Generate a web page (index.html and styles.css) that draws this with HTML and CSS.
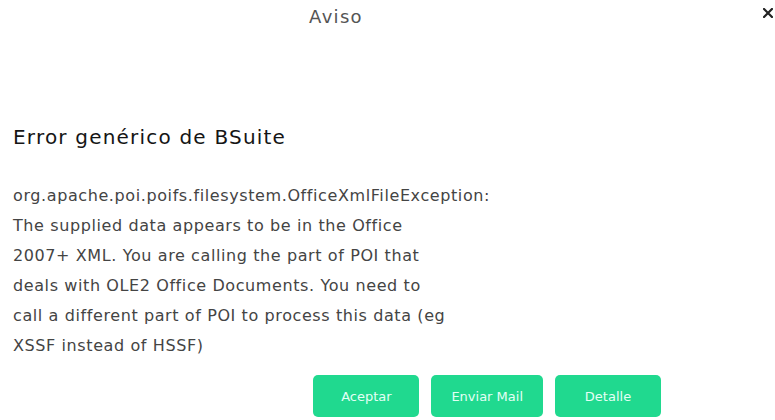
FILE: index.html
```html
<!DOCTYPE html>
<html lang="es">
<head>
<meta charset="utf-8">
<title>Aviso</title>
<link rel="stylesheet" href="styles.css">
</head>
<body>
<div class="modal">
  <header class="modal-header">
    <h1 class="modal-title">Aviso</h1>
    <button class="close" aria-label="Cerrar">
      <svg width="10" height="10" viewBox="0 0 10 10"><path d="M1 1L9 9M9 1L1 9" stroke="#222" stroke-width="2.2" stroke-linecap="square"/></svg>
    </button>
  </header>
  <main class="modal-body">
    <h2 class="error-title">Error genérico de BSuite</h2>
    <p class="error-text">org.apache.poi.poifs.filesystem.OfficeXmlFileException:<br>The supplied data appears to be in the Office<br>2007+ XML. You are calling the part of POI that<br>deals with OLE2 Office Documents. You need to<br>call a different part of POI to process this data (eg<br>XSSF instead of HSSF)</p>
  </main>
  <footer class="modal-footer">
    <button class="btn">Aceptar</button>
    <button class="btn">Enviar Mail</button>
    <button class="btn">Detalle</button>
  </footer>
</div>
</body>
</html>
```
FILE: styles.css
```css
html, body {
  margin: 0;
  background: #fff;
}
body {
  font-family: "DejaVu Sans", "Open Sans", sans-serif;
  color: #444;
}
.modal {
  width: 775px;
  height: 420px;
  overflow: hidden;
}
.modal-header {
  display: grid;
  grid-template-columns: 672px 1fr;
  align-items: start;
  height: 40px;
}
.modal-title {
  margin: 0;
  padding-top: 5px;
  text-align: center;
  font-size: 18px;
  line-height: 24px;
  font-weight: 400;
  letter-spacing: 1.3px;
  color: #555;
}
.close {
  justify-self: end;
  margin: 7px 1px 0 0;
  padding: 0;
  border: 0;
  background: none;
  width: 12px;
  height: 12px;
  display: flex;
  align-items: center;
  justify-content: center;
}
.modal-body {
  padding: 83px 11px 0 13px;
}
.error-title {
  margin: 0;
  font-size: 20px;
  line-height: 28px;
  font-weight: 400;
  letter-spacing: 1.2px;
  color: #151515;
}
.error-text {
  margin: 30px 0 0;
  font-size: 16px;
  line-height: 30px;
  letter-spacing: 0.6px;
  color: #444;
  white-space: nowrap;
}
.modal-footer {
  width: 661px;
  display: flex;
  justify-content: flex-end;
  gap: 12px;
  margin-top: 14px;
}
.btn {
  min-width: 106px;
  height: 42px;
  padding: 0 20px;
  border: 0;
  border-radius: 5px;
  background: #20d98f;
  color: #e3fff5;
  font-family: "DejaVu Sans", Verdana, sans-serif;
  font-size: 13px;
}
```
